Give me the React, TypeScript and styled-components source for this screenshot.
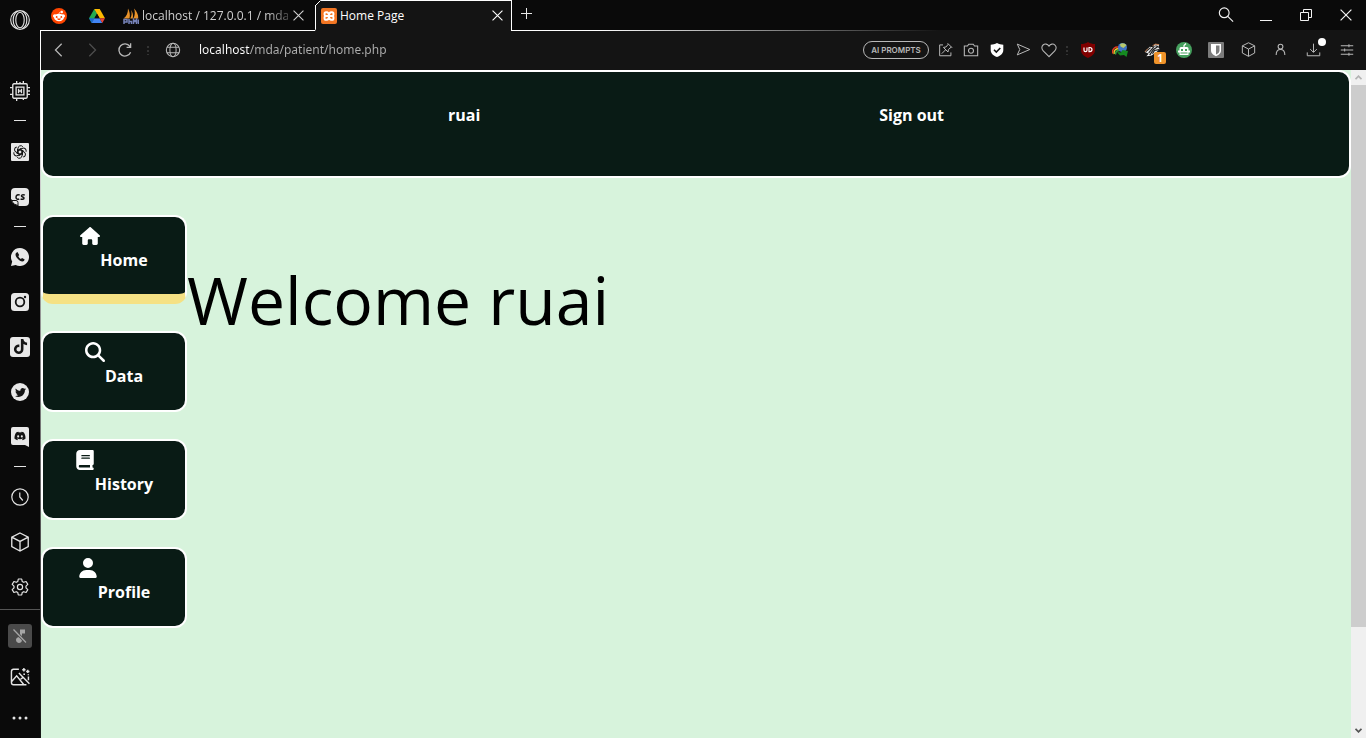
import React from "react";
import styled, { createGlobalStyle, css } from "styled-components";
import { FaBook, FaHouse, FaMagnifyingGlass, FaUser, FaTiktok, FaTwitter, FaDiscord, FaRedditAlien } from "react-icons/fa6";

const uiFont = '"Open Sans", "Noto Sans", sans-serif';

const GlobalStyle = createGlobalStyle`
  *, *::before, *::after { box-sizing: border-box; }
  body { margin: 0; background: #0a0a0a; font-family: ${uiFont}; }
  button { font: inherit; color: inherit; background: none; border: 0; padding: 0; }
  svg { display: block; flex: none; }
`;

/* ---------- layout ---------- */

const Shell = styled.div`
  display: flex;
  height: 100vh;
  overflow: hidden;
`;

const Sidebar = styled.aside`
  display: flex;
  flex-direction: column;
  flex: none;
  width: 40px;
  background: #0a0a0a;
  color: #e4e4e4;
`;

const SideButton = styled.button<{ $tall?: boolean }>`
  display: flex;
  align-items: center;
  justify-content: center;
  flex: none;
  height: ${(p) => (p.$tall ? 45 : 40)}px;
`;

const SideGroup = styled.div<{ $top?: number }>`
  display: flex;
  flex-direction: column;
  flex: none;
  padding-top: ${(p) => p.$top ?? 0}px;
`;

const SideDash = styled.hr`
  flex: none;
  width: 12px;
  height: 1px;
  margin: 7px auto;
  border: 0;
  background: #e4e4e4;
`;

const SideTools = styled.div`
  display: flex;
  flex-direction: column;
  gap: 1px;
  padding-top: 6px;
  border-top: 1px solid #555;
`;

const MutedBox = styled.span`
  display: flex;
  align-items: center;
  justify-content: center;
  width: 24px;
  height: 24px;
  border-radius: 3px;
  background: #4a4a4a;
  color: #a6a6a6;
`;

const Main = styled.div`
  display: flex;
  flex-direction: column;
  flex: 1;
  min-width: 0;
`;

const TabBar = styled.div`
  display: flex;
  flex: none;
  height: 31px;
  background: #0a0a0a;
  color: #d0d0d0;
  font-size: 12px;
`;

const underline = css`
  background: linear-gradient(#fff, #fff) left bottom / 100% 1px no-repeat;
`;

const PinnedTab = styled.button`
  display: flex;
  align-items: center;
  justify-content: center;
  width: 38px;
  ${underline}
`;

const Tab = styled.div`
  display: flex;
  align-items: center;
  width: 199px;
  padding: 0 10px 0 7px;
  gap: 3px;
  ${underline}
`;

const TabTitle = styled.button<{ $fade?: boolean }>`
  flex: 1;
  min-width: 0;
  white-space: nowrap;
  text-align: left;
  ${(p) =>
    p.$fade &&
    css`
      mask-image: linear-gradient(90deg, #000 85%, #0005);
    `}
`;

const CloseButton = styled.button`
  display: flex;
  align-items: center;
  justify-content: center;
  flex: none;
  width: 14px;
  height: 20px;
`;

const ActiveTab = styled.div`
  display: flex;
  width: 197px;
  color: #fff;
`;

const ActiveTabBody = styled.div`
  display: flex;
  align-items: center;
  flex: 1;
  gap: 3px;
  padding: 0 7px 1px 0;
  background: #141414;
  border-top: 1px solid #fff;
  border-right: 1px solid #fff;
`;

const TabRest = styled.div`
  display: flex;
  flex: 1;
  justify-content: space-between;
  background: linear-gradient(90deg, #fff 10%, #141414 50%) left bottom / 100% 1px no-repeat;
`;

const NewTab = styled.button`
  display: flex;
  align-items: center;
  justify-content: center;
  width: 29px;
  height: 27px;
  color: #e8e8e8;
`;

const WindowControls = styled.div`
  display: flex;
  color: #f2f2f2;
`;

const WindowButton = styled.button`
  display: flex;
  align-items: center;
  justify-content: center;
  width: 40px;
  height: 30px;
`;

const Toolbar = styled.div`
  display: flex;
  align-items: center;
  flex: none;
  height: 39px;
  padding: 0 3px 2px 1px;
  background: #141414;
  color: #b8b8b8;
  border-left: 1px solid #fff;
`;

const ToolCell = styled.button<{ $w: number; $dim?: boolean }>`
  position: relative;
  display: flex;
  align-items: center;
  justify-content: center;
  flex: none;
  width: ${(p) => p.$w}px;
  height: 30px;
  opacity: ${(p) => (p.$dim ? 0.35 : 1)};
`;

const Dots = styled.span<{ $w: number }>`
  flex: none;
  width: ${(p) => p.$w}px;
  height: 10px;
  background: radial-gradient(circle, #333 1px, transparent 1px) center top / 4px 4px repeat-y;
`;

const Address = styled.input`
  flex: 1;
  min-width: 0;
  height: 28px;
  margin-left: 8px;
  padding: 0;
  border: 0;
  outline: 0;
  font-family: "Noto Sans", "Open Sans", sans-serif;
  font-size: 12px;
  color: #b0b0b0;
  background: linear-gradient(90deg, #fff 51px, #b0b0b0 51px);
  background-clip: text;
  -webkit-text-fill-color: transparent;
`;

const Prompts = styled.button`
  flex: none;
  width: 66px;
  height: 18px;
  margin-right: 3px;
  border: 1px solid #b8b8b8;
  border-radius: 9px;
  font-family: Inter, sans-serif;
  font-size: 8px;
  font-weight: 600;
  line-height: 16px;
  white-space: nowrap;
`;

const Badge = styled.span`
  position: absolute;
  right: 2px;
  bottom: 1px;
  width: 12px;
  height: 12px;
  border-radius: 2px;
  background: #f0932a;
  color: #fff;
  font-size: 10px;
  font-weight: 700;
  line-height: 12px;
  text-align: center;
`;

const NoticeDot = styled.span`
  position: absolute;
  top: 3px;
  right: 4px;
  width: 8px;
  height: 8px;
  border-radius: 50%;
  background: #fff;
`;

const Viewport = styled.div`
  display: flex;
  flex: 1;
  min-height: 0;
  border-left: 1px solid;
  border-image: linear-gradient(#fff, #999 35%, #555 70%, #141414) 1;
`;

const Page = styled.main`
  flex: 1;
  min-width: 0;
  overflow: hidden;
  background: #d7f3dc;
`;

const SiteHeader = styled.header`
  display: flex;
  justify-content: space-evenly;
  height: 108px;
  padding: 32px 6px 0;
  border: 2px solid #fff;
  border-radius: 12px;
  background: #091b15;
`;

const HeaderLink = styled.a`
  color: #fff;
  font-size: 16px;
  font-weight: 700;
  line-height: 22px;
  text-decoration: none;
`;

const Content = styled.div`
  display: flex;
  padding-top: 37px;
`;

const SiteNav = styled.nav`
  display: flex;
  flex-direction: column;
  flex: none;
  gap: 27px;
  width: 146px;
`;

const NavLink = styled.a<{ $active?: boolean }>`
  display: flex;
  justify-content: center;
  height: ${(p) => (p.$active ? 89 : 81)}px;
  padding-top: 9px;
  border: 2px solid #fff;
  border-bottom: ${(p) => (p.$active ? "10px solid #f5e184" : "2px solid #fff")};
  border-radius: 12px;
  background: #091b15;
  color: #fff;
  font-size: 16px;
  font-weight: 700;
  line-height: 22px;
  text-decoration: none;

  svg {
    width: auto;
    height: 20px;
  }
`;

const NavLabel = styled.span`
  padding-top: 23px;
`;

const Welcome = styled.h1`
  margin: 40px 0 0;
  font-size: 66px;
  font-weight: 400;
  line-height: 88px;
  color: #000;
`;

const Scrollbar = styled.div`
  display: flex;
  flex-direction: column;
  flex: none;
  width: 15px;
  background: #f0f0f0;
`;

const ScrollArrow = styled.button<{ $dim?: boolean }>`
  display: flex;
  align-items: center;
  justify-content: center;
  height: 15px;
  color: ${(p) => (p.$dim ? "#b4b4b4" : "#555")};
`;

const ScrollThumb = styled.div`
  flex: 542;
  background: #cdcdcd;
`;

const ScrollSpace = styled.div`
  flex: 96;
`;

/* ---------- drawings ---------- */

type LineProps = { size?: number; w?: number; children: React.ReactNode };

const Line = ({ size = 18, w = 1.2, children }: LineProps) => (
  <svg width={size} height={size} viewBox="0 0 18 18" fill="none" stroke="currentColor" strokeWidth={w} aria-hidden="true">
    {children}
  </svg>
);

const OperaIcon = () => (
  <Line size={20} w={1}>
    <circle cx="9" cy="9" r="8.400" />
    <ellipse cx="9" cy="9" rx="3.800" ry="7" />
    <path d="M7 1.200C1.500 4 1.500 14 7 16.800M11 1.200c5.500 2.800 5.500 12.800 0 15.600" />
  </Line>
);

const ChipIcon = () => (
  <Line size={20}>
    <rect x="2.500" y="2.500" width="13" height="13" rx="1" />
    <rect x="5.500" y="5.500" width="7" height="7" />
    <path d="M7.700 7v4M10.300 7v4M7.700 9h2.600M6 0v2.500M9 1v1.500M12 0v2.500M6 15.500V18M12 15.500V17M0 6h2.500M0 12h2.500M15.500 6H18M15.500 9H18M15.500 12H18" />
  </Line>
);

const GptIcon = () => (
  <svg width="18" height="18" viewBox="0 0 18 18" aria-hidden="true">
    <rect width="18" height="18" rx="1" fill="#e8e8e8" />
    <g fill="none" stroke="#141414" strokeWidth="1">
      {[0, 60, 120, 180, 240, 300].map((a) => (
        <path key={a} transform={`rotate(${a} 9 9)`} d="M7 10.200V5.400a2.700 2.700 0 0 1 4.800-1.700M7 7.800l2.400-1.400 3.600 2" />
      ))}
    </g>
  </svg>
);

const CsIcon = () => (
  <svg width="18" height="18" viewBox="0 0 18 18" aria-hidden="true">
    <path d="M4 0h10q4 0 4 4v10q0 4-4 4H8L0 11V4q0-4 4-4z" fill="#e8e8e8" />
    <path d="M.5 12.500h4.500q2 0 2 2v3Q2 17 .5 12.500z" fill="#e8e8e8" stroke="#141414" strokeWidth="1" />
    <path d="M8.700 7.200C7 6 5 7.200 5 9.200s1.800 2.500 3.200 1.600M13.800 7.200c-1.800-1-3.600-.2-3.300.9.200 1 2.600.8 2.500 2-.1 1.300-2.200 1.500-3.400.8" fill="none" stroke="#141414" strokeWidth="1.500" />
  </svg>
);

const WhatsappIcon = () => (
  <svg width="18" height="18" viewBox="0 0 18 18" aria-hidden="true">
    <path d="M9 0a9 9 0 1 1-4.300 16.900L0 18l1.200-4.500A9 9 0 0 1 9 0z" fill="#e8e8e8" />
    <path d="M6.500 4 5 4.900c-1 1.400-.4 3.500 1.500 5.700 2.200 2.600 4.800 3.500 6.400 2.400l.8-1.600-2.600-1.500-1.300 1.100C8.900 10.500 7.800 9.400 7.300 8.200l.9-1.200z" fill="#141414" />
  </svg>
);

const InstagramIcon = () => (
  <svg width="18" height="18" viewBox="0 0 18 18" aria-hidden="true">
    <rect width="18" height="18" rx="3.500" fill="#e8e8e8" />
    <circle cx="9" cy="9" r="4.300" fill="none" stroke="#141414" strokeWidth="1.800" />
    <circle cx="14" cy="4" r="1.200" fill="#141414" />
  </svg>
);

const TiktokIcon = () => (
  <svg width="20" height="20" viewBox="0 0 20 20" aria-hidden="true">
    <rect width="20" height="20" rx="3" fill="#e8e8e8" />
    <FaTiktok x={3} y={2} size={15} color="#141414" />
  </svg>
);

const TwitterIcon = () => (
  <svg width="18" height="18" viewBox="0 0 18 18" aria-hidden="true">
    <circle cx="9" cy="9" r="9" fill="#e8e8e8" />
    <FaTwitter x={4} y={4} size={11} color="#141414" />
  </svg>
);

const DiscordIcon = () => (
  <svg width="18" height="20" viewBox="0 0 18 20" aria-hidden="true">
    <path d="M2 0h14q2 0 2 2v18l-4-2H2q-2 0-2-2V2q0-2 2-2z" fill="#e8e8e8" />
    <FaDiscord x={3} y={3} size={12} color="#141414" />
  </svg>
);

const ClockIcon = () => (
  <Line>
    <circle cx="9" cy="9" r="8.200" />
    <path d="M8.800 4.500V9l3 3.500" />
  </Line>
);

const CubeIcon = ({ size = 20 }: { size?: number }) => (
  <Line size={size}>
    <path d="M9 .9 16.400 4.600v8.600L9 17.200 1.600 13.200V4.600zM1.600 4.600 9 8.500l7.400-3.900M9 8.500v8.700" />
  </Line>
);

const GearIcon = () => (
  <Line size={18}>
    <path d="M7.300 1h3.400l.5 2.400 1.500.9 2.400-.8 1.700 2.900L15 8.100v1.800l1.800 1.700-1.700 2.900-2.400-.8-1.500.9-.5 2.400H7.300l-.5-2.400-1.500-.9-2.400.8-1.700-2.900L3 9.900V8.100L1.200 6.400l1.700-2.900 2.400.8 1.500-.9z" strokeLinejoin="round" />
    <circle cx="9" cy="9" r="2.600" />
  </Line>
);

const MutedNoteIcon = () => (
  <svg width="16" height="16" viewBox="0 0 16 16" aria-hidden="true">
    <path d="M8 10.500V1.500h5v4h-3V12A3 3 0 1 1 8 9.200z" fill="currentColor" />
    <path d="M1.500 1.500 14 14.500" stroke="#4a4a4a" strokeWidth="3" />
    <path d="M1.500 1.500 14 14.500" stroke="currentColor" strokeWidth="1.300" />
  </svg>
);

const PictureIcon = () => (
  <Line size={20} w={1.3}>
    <path d="M8 2H3.200Q1.300 2 1.300 4v10q0 2 1.900 2h11.600M16.600 12V8.500M1.500 13l4.500-5 6.500 8M9.500 11l2-1.500M8 5.500l9.500 9.500" />
    <path d="M12.500 1v3M11 2.500h3M16 2.500v3M14.500 4h3M12 6.500h1.500M16.500 6.500v1" />
  </Line>
);

const MoreIcon = () => (
  <svg width="16" height="4" viewBox="0 0 16 4" fill="currentColor" aria-hidden="true">
    <circle cx="2" cy="2" r="1.500" />
    <circle cx="8" cy="2" r="1.500" />
    <circle cx="14" cy="2" r="1.500" />
  </svg>
);

const RedditIcon = () => (
  <svg width="16" height="16" viewBox="0 0 16 16" aria-hidden="true">
    <circle cx="8" cy="8" r="8" fill="#ff4500" />
    <FaRedditAlien x={2} y={2} size={12} color="#fff" />
  </svg>
);

const DriveIcon = () => (
  <svg width="16" height="14" viewBox="0 0 16 14" aria-hidden="true">
    <path d="M5.300 0h5.400L8 4.700z" fill="#12833c" />
    <path d="M5.300 0 8 4.700 2.700 14 0 9.300z" fill="#22aa50" />
    <path d="M10.700 0 16 9.300h-5.400L5.300 0z" fill="#ffba00" />
    <path d="M5.400 9.300H0L2.700 14z" fill="#1967d2" />
    <path d="M5.400 9.300h5.200L13.300 14H2.700z" fill="#4285f4" />
    <path d="M10.600 9.300H16L13.300 14z" fill="#ea4335" />
    <path d="M8 4.700 5.400 9.300h5.200z" fill="#0a0a0a" />
  </svg>
);

const SailIcon = () => (
  <svg width="16" height="16" viewBox="0 0 16 16" aria-hidden="true">
    <path d="M5 .5C5 5 3.500 8.500.5 10.500H6.500C7.500 7 6.500 3 5 .5zM8 2c1 3 .8 6-.8 8.500h2.500C10.500 7.500 9.800 4.500 8 2zM11 .5c1.300 3.500 1 7-.7 10h5C15.500 6.500 13.500 3 11 .5z" fill="#e8932a" />
    <path d="M1 16v-4.500h3v2.500H1M6 11v5M6 13.500h2.500V16M10.500 16v-4.500l1.500 2 1.500-2V16M15.300 11.500V16" fill="none" stroke="#7682b8" strokeWidth="1.500" />
  </svg>
);

const XamppIcon = () => (
  <svg width="16" height="16" viewBox="0 0 16 16" aria-hidden="true">
    <rect width="16" height="16" rx="2" fill="#f37623" />
    <path d="M6.700 4.200H5q-1.500 0-1.500 1.900T5 8q-1.500 0-1.500 1.900T5 11.800h.8Q8 11.800 8 8t2.200-3.800h.8q1.500 0 1.500 1.900T11 8q1.500 0 1.500 1.900T11 11.800H9.300M5 8h6M6 4.200Q8 4.500 8 8t2 3.800" fill="none" stroke="#fff" strokeWidth="1.900" />
  </svg>
);

const CrossIcon = ({ size = 11 }: { size?: number }) => (
  <svg width={size} height={size} viewBox="0 0 10 10" fill="none" stroke="currentColor" strokeWidth="1" aria-hidden="true">
    <path d="M.5.5l9 9M9.500.5l-9 9" />
  </svg>
);

const TabEdge = () => (
  <svg width="6" height="31" viewBox="0 0 6 31" aria-hidden="true">
    <path d="M.5 31V5.500l5-5H6V31z" fill="#141414" />
    <path d="M0 30.500V5.500M.5 5.500l5-5H6M.5 5v24.500" fill="none" stroke="#fff" />
  </svg>
);

const UblockIcon = () => (
  <svg width="16" height="16" viewBox="0 0 16 16" aria-hidden="true">
    <path d="M8 0c2 1.500 4.500 2 7 2v6c0 4-3 6.300-7 8-4-1.700-7-4-7-8V2c2.500 0 5-.5 7-2z" fill="#800000" />
    <path d="M4 5.500v2.800q0 1.300 1.500 1.300t1.500-1.300V5.500M9 5.500v4.100h.8q2.200 0 2.200-2t-2.200-2.100z" fill="none" stroke="#fff" strokeWidth="1.200" />
  </svg>
);

const IdmIcon = () => (
  <svg width="16" height="16" viewBox="0 0 16 16" aria-hidden="true">
    <path d="M1 11.500C-.5 7 3 4 8 5.500" fill="none" stroke="#e53b22" strokeWidth="1.500" />
    <path d="M2.200 12C1.300 8.500 4 6 8 7" fill="none" stroke="#f5d02c" strokeWidth="1.500" />
    <path d="M3.700 12.500C3 10 5 8 8 8.500" fill="none" stroke="#2f9e44" strokeWidth="1.600" />
    <circle cx="10.500" cy="5.500" r="4.500" fill="#3f74c4" />
    <path d="M8 2.200C10 .6 13 1.100 14.500 3.300L11.500 6 8.500 4.500z" fill="#b9c96a" />
    <path d="M5 10l4 .5 1.500-2.500 5.500 1-1.500 6-2.500-2-4 .5z" fill="#158a20" />
  </svg>
);

const BadgerIcon = () => (
  <svg width="17" height="14" viewBox="0 0 18 14" aria-hidden="true">
    <path d="M1 9 6 3.500 9 4l3-3 4 .5-1 2.500 1.500 2-4 4-5 3-5 .5L5 11z" fill="#eee" />
    <path d="M2 8.500 7 4.500M5 10l6-7M6 12.500l4-6 4.500-3M9 11l2-3.500 5-1M12 2.500l3 1" stroke="#222" strokeWidth="1.300" fill="none" />
    <path d="M9 2.500 12 .8l4 .5M4 5.500 1 9" stroke="#c77d4c" fill="none" />
  </svg>
);

const RobotIcon = () => (
  <svg width="16" height="16" viewBox="0 0 16 16" aria-hidden="true">
    <circle cx="8" cy="8" r="8" fill="#46a05e" />
    <path d="M8 5.500V3.500l2-2" stroke="#fff" strokeWidth="1.200" fill="none" />
    <path d="M5 5h6q1.500 0 1.500 1.500v2H14v2h-1.500V13h-9v-2.500H2v-2h1.500v-2Q3.500 5 5 5z" fill="#fff" />
    <path d="M5 7h2v2H5zM9 7h2v2H9zM4.500 10.500h7v1h-7z" fill="#46a05e" />
  </svg>
);

const BitwardenIcon = () => (
  <svg width="16" height="16" viewBox="0 0 16 16" aria-hidden="true">
    <rect width="16" height="16" rx="1" fill="#7c7c7c" />
    <path d="M3 2h10v6.500c0 3-2.500 4.500-5 5.700C5.500 13 3 11.500 3 8.500z" fill="#fff" />
    <path d="M8 3.500h3.500v5c0 2-1.500 3-3.500 4z" fill="#7c7c7c" />
  </svg>
);

/* ---------- content ---------- */

const sideApps = [
  { label: "ChatGPT", icon: <GptIcon /> },
  { label: "CS", icon: <CsIcon /> },
];

const sideSocial = [
  { label: "WhatsApp", icon: <WhatsappIcon /> },
  { label: "Instagram", icon: <InstagramIcon /> },
  { label: "TikTok", icon: <TiktokIcon /> },
  { label: "Twitter", icon: <TwitterIcon /> },
  { label: "Discord", icon: <DiscordIcon /> },
];

const sideSystem = [
  { label: "History", icon: <ClockIcon /> },
  { label: "Extensions", icon: <CubeIcon /> },
  { label: "Settings", icon: <GearIcon /> },
];

const pageActions = [
  { label: "Pinboard", icon: <Line size={15}><path d="M6 3.500H2V16.500h13.500V12.500M11.500 1.500l5.500 5.500M12.500 2.500 9.500 6 6.500 6.500l5.500 5.500.5-3L16 6M9 9.500 4.500 14" /></Line> },
  { label: "Snapshot", icon: <Line size={16}><path d="M1.500 4.500H5L6.500 2.500h5L13 4.500h3.500v11h-15z" /><circle cx="9" cy="9.800" r="2.800" /></Line> },
  { label: "Protection", icon: <svg width="14" height="14" viewBox="0 0 14 14" aria-hidden="true"><path d="M7 0c2 1.300 4 1.500 6.300 1.800V7c0 3.500-2.300 5.500-6.300 7C3 12.500.7 10.500.7 7V1.800C3 1.500 5 1.300 7 0z" fill="#fff" /><path d="M4 6.800l2.300 2.300L10.300 5" fill="none" stroke="#141414" strokeWidth="1.600" /></svg> },
  { label: "Send", icon: <Line size={15}><path d="M1.500 2.500 16.500 9l-15 6.500L4.500 9z" /></Line> },
  { label: "Save", icon: <Line size={16}><path d="M9 16.500 2.500 10C.5 8 .5 5 2.300 3.400 4.300 1.600 7.300 2.100 9 4.600c1.700-2.500 4.700-3 6.700-1.200C17.500 5 17.500 8 15.500 10z" /></Line> },
];

const extensions = [
  { label: "uBlock", icon: <UblockIcon /> },
  { label: "Download manager", icon: <IdmIcon /> },
  { label: "Privacy Badger", icon: <BadgerIcon />, badge: "1" },
  { label: "Robot", icon: <RobotIcon /> },
  { label: "Bitwarden", icon: <BitwardenIcon /> },
  { label: "Extensions", icon: <CubeIcon size={15} /> },
];

const navItems = [
  { label: "Home", icon: <FaHouse />, active: true },
  { label: "Data", icon: <FaMagnifyingGlass /> },
  { label: "History", icon: <FaBook /> },
  { label: "Profile", icon: <FaUser /> },
];

const renderSide = (items: { label: string; icon: React.ReactNode }[]) =>
  items.map((i) => (
    <SideButton key={i.label} $tall aria-label={i.label}>
      {i.icon}
    </SideButton>
  ));

const BrowserSidebar = () => (
  <Sidebar>
    <SideButton aria-label="Opera menu"><OperaIcon /></SideButton>
    <SideGroup $top={28}>
      <SideButton $tall aria-label="Workspace"><ChipIcon /></SideButton>
    </SideGroup>
    <SideDash />
    <SideGroup $top={1}>{renderSide(sideApps)}</SideGroup>
    <SideDash />
    <SideGroup>{renderSide(sideSocial)}</SideGroup>
    <SideDash />
    <SideGroup>{renderSide(sideSystem)}</SideGroup>
    <SideTools>
      <SideButton aria-label="Player muted"><MutedBox><MutedNoteIcon /></MutedBox></SideButton>
      <SideButton aria-label="Wallpaper"><PictureIcon /></SideButton>
      <SideButton aria-label="More"><MoreIcon /></SideButton>
    </SideTools>
  </Sidebar>
);

const BrowserTabs = () => (
  <TabBar>
    <PinnedTab aria-label="Reddit"><RedditIcon /></PinnedTab>
    <PinnedTab aria-label="Google Drive"><DriveIcon /></PinnedTab>
    <Tab>
      <SailIcon />
      <TabTitle $fade>localhost / 127.0.0.1 / mda</TabTitle>
      <CloseButton aria-label="Close tab"><CrossIcon /></CloseButton>
    </Tab>
    <ActiveTab>
      <TabEdge />
      <ActiveTabBody>
        <XamppIcon />
        <TabTitle>Home Page</TabTitle>
        <CloseButton aria-label="Close tab"><CrossIcon /></CloseButton>
      </ActiveTabBody>
    </ActiveTab>
    <TabRest>
      <NewTab aria-label="New tab">
        <svg width="11" height="11" viewBox="0 0 11 11" stroke="currentColor" aria-hidden="true"><path d="M5.500 0v11M0 5.500h11" /></svg>
      </NewTab>
      <WindowControls>
        <WindowButton aria-label="Search tabs"><Line size={16} w={1.3}><circle cx="7" cy="6.500" r="5.500" /><path d="M11 10.500l6 6" /></Line></WindowButton>
        <WindowButton aria-label="Minimize"><svg width="12" height="12" viewBox="0 0 12 12" stroke="currentColor" aria-hidden="true"><path d="M0 11.500h12" /></svg></WindowButton>
        <WindowButton aria-label="Restore"><svg width="12" height="12" viewBox="0 0 12 12" fill="none" stroke="currentColor" aria-hidden="true"><path d="M.5 3.500h8v8h-8zM3.500 3.500v-3h8v8h-3" /></svg></WindowButton>
        <WindowButton aria-label="Close"><CrossIcon size={12} /></WindowButton>
      </WindowControls>
    </TabRest>
  </TabBar>
);

const BrowserToolbar = () => (
  <Toolbar>
    <ToolCell $w={33} aria-label="Back"><Line size={16} w={1.4}><path d="M12 2 5 9l7 7" /></Line></ToolCell>
    <ToolCell $w={33} $dim aria-label="Forward"><Line size={16} w={1.4}><path d="M6 2l7 7-7 7" /></Line></ToolCell>
    <ToolCell $w={33} aria-label="Reload"><Line size={16} w={1.5}><path d="M15.300 11.500A6.800 6.800 0 1 1 14.500 5M15.300 1.500v4.500h-4.500" /></Line></ToolCell>
    <Dots $w={14} />
    <ToolCell $w={36} aria-label="Site information"><Line size={16}><circle cx="9" cy="9" r="7.500" /><ellipse cx="9" cy="9" rx="3.500" ry="7.500" /><path d="M2.300 6h13.400M2.300 12h13.400" /></Line></ToolCell>
    <Address aria-label="Address" defaultValue="localhost/mda/patient/home.php" />
    <Prompts>AI PROMPTS</Prompts>
    {pageActions.map((a) => (
      <ToolCell key={a.label} $w={26} aria-label={a.label}>{a.icon}</ToolCell>
    ))}
    <Dots $w={10} />
    {extensions.map((e) => (
      <ToolCell key={e.label} $w={32} aria-label={e.label}>
        {e.icon}
        {e.badge && <Badge>{e.badge}</Badge>}
      </ToolCell>
    ))}
    <ToolCell $w={33} aria-label="Account"><Line size={13} w={1.5}><circle cx="9" cy="5" r="3.300" /><path d="M3 16.500c0-5 2.500-7.500 6-7.500s6 2.500 6 7.500" /></Line></ToolCell>
    <ToolCell $w={33} aria-label="Downloads"><Line size={15}><path d="M9 2v10M5 8.500l4 4 4-4M1.500 12.500v4h15v-4" /></Line><NoticeDot /></ToolCell>
    <ToolCell $w={33} aria-label="Easy setup"><Line size={14} w={1.3}><path d="M1 3.500h16M1 9h16M1 14.500h16M11.500 1.500v4M6 7v4M11.500 12.500v4" /></Line></ToolCell>
  </Toolbar>
);

export default function App() {
  return (
    <>
      <GlobalStyle />
      <Shell>
        <BrowserSidebar />
        <Main>
          <BrowserTabs />
          <BrowserToolbar />
          <Viewport>
            <Page>
              <SiteHeader>
                <HeaderLink href="#user">ruai</HeaderLink>
                <HeaderLink href="#signout">Sign out</HeaderLink>
              </SiteHeader>
              <Content>
                <SiteNav>
                  {navItems.map((n) => (
                    <NavLink key={n.label} href={`#${n.label.toLowerCase()}`} $active={n.active}>
                      {n.icon}
                      <NavLabel>{n.label}</NavLabel>
                    </NavLink>
                  ))}
                </SiteNav>
                <Welcome>Welcome ruai</Welcome>
              </Content>
            </Page>
            <Scrollbar>
              <ScrollArrow $dim aria-label="Scroll up"><svg width="7" height="5" viewBox="0 0 7 5" fill="none" stroke="currentColor" strokeWidth="1.800" aria-hidden="true"><path d="M.5 4.200l3-3 3 3" /></svg></ScrollArrow>
              <ScrollThumb />
              <ScrollSpace />
              <ScrollArrow aria-label="Scroll down"><svg width="7" height="5" viewBox="0 0 7 5" fill="none" stroke="currentColor" strokeWidth="1.800" aria-hidden="true"><path d="M.5.8l3 3 3-3" /></svg></ScrollArrow>
            </Scrollbar>
          </Viewport>
        </Main>
      </Shell>
    </>
  );
}
